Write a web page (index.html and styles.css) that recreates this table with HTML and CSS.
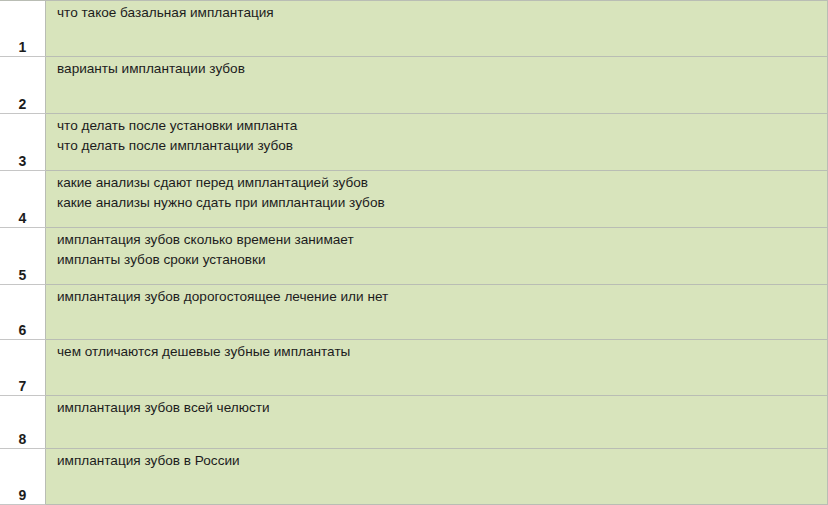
FILE: index.html
```html
<!DOCTYPE html>
<html lang="ru">
<head>
    <meta charset="UTF-8">
    <title>Запросы</title>
    <link rel="stylesheet" href="styles.css">
</head>
<body>
    <div class="sheet">
        <div class="num">1</div>
        <div class="cell">что такое базальная имплантация</div>

        <div class="num">2</div>
        <div class="cell">варианты имплантации зубов</div>

        <div class="num">3</div>
        <div class="cell">что делать после установки импланта<br>что делать после имплантации зубов</div>

        <div class="num">4</div>
        <div class="cell">какие анализы сдают перед имплантацией зубов<br>какие анализы нужно сдать при имплантации зубов</div>

        <div class="num">5</div>
        <div class="cell">имплантация зубов сколько времени занимает<br>импланты зубов сроки установки</div>

        <div class="num">6</div>
        <div class="cell">имплантация зубов дорогостоящее лечение или нет</div>

        <div class="num">7</div>
        <div class="cell">чем отличаются дешевые зубные имплантаты</div>

        <div class="num">8</div>
        <div class="cell">имплантация зубов всей челюсти</div>

        <div class="num">9</div>
        <div class="cell">имплантация зубов в России</div>
    </div>
</body>
</html>
```

FILE: styles.css
```css
* {
    margin: 0;
    padding: 0;
    box-sizing: border-box;
}

html, body {
    width: 828px;
    height: 505px;
    background: #ffffff;
    font-family: "Liberation Sans", Arial, sans-serif;
    color: #1c1c1c;
    overflow: hidden;
}

.sheet {
    display: grid;
    grid-template-columns: 46px 1fr;
    grid-template-rows: 56px 57px 57px 57px 57px 55px 56px 53px 56px;
    width: 828px;
    border-top: 1px solid #b9bdb4;
}

.num {
    display: flex;
    align-items: flex-end;
    justify-content: center;
    padding-bottom: 1px;
    font-size: 14px;
    font-weight: bold;
    background: #ffffff;
    border-bottom: 1px solid #c6c6c6;
    border-right: 1px solid #b9bdb4;
}

.cell {
    padding: 2px 0 0 11px;
    font-size: 13.6px;
    line-height: 20px;
    background: #d8e4bc;
    border-bottom: 1px solid #b9bdb4;
    border-right: 1px solid #b9bdb4;
}
```
